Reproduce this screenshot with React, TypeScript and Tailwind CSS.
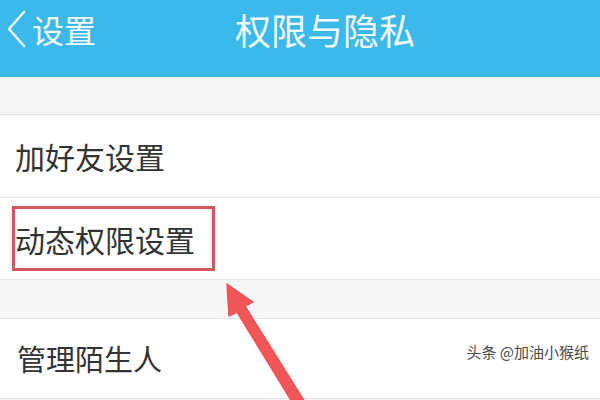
import React from "react";

const CJK = "font-['Noto_Sans_CJK_SC','Noto_Sans',sans-serif]";

function Row({ children, border = true }: { children: React.ReactNode; border?: boolean }) {
  return (
    <div className={`bg-white flex items-center ${border ? "border-t border-[#e4e5e7]" : ""}`}>
      {children}
    </div>
  );
}

export default function App() {
  return (
    <div className={`relative w-[600px] h-[400px] overflow-hidden bg-[#f5f6f8] ${CJK}`}>
      {/* top bar */}
      <div className="h-[77px] bg-[#3bb9ea] text-[#f4fbff]">
        <div className="h-[58px] flex items-center">
          <svg width="24" height="40" viewBox="0 0 24 40" className="ml-[4px]">
            <path d="M20 3 L5 20 L20 37" fill="none" stroke="#f4fbff" strokeWidth="2.4" strokeLinecap="round" strokeLinejoin="round" />
          </svg>
          <span className="ml-[4px] text-[32px] leading-none">设置</span>
          <span className="ml-[139px] text-[36px] leading-none">权限与隐私</span>
        </div>
      </div>

      <div className="h-[37px]" />

      <Row>
        <div className="h-[82px] flex items-center pl-[15px] text-[30px] text-[#333] leading-none">加好友设置</div>
      </Row>
      <Row>
        <div className="h-[81px] flex items-center pl-[12px]">
          <div className="w-[203px] h-[65px] border-[3px] border-[#d3585b] flex items-center text-[30px] text-[#333] leading-none">
            动态权限设置
          </div>
        </div>
      </Row>

      <div className="h-[39px] border-t border-[#e4e5e7]" />

      <div className="bg-white border-t border-b border-[#e4e5e7]">
        <div className="h-[79px] flex items-center pl-[17px] text-[29px] text-[#333] leading-none">管理陌生人</div>
      </div>

      {/* annotation arrow */}
      <svg className="absolute left-0 top-0 pointer-events-none" width="600" height="400" viewBox="0 0 600 400">
        <polygon
          points="227,284 253,302 245,306 310,410 300,415 237,312 229,316"
          fill="#f05558"
          stroke="#f05558"
          strokeWidth="1.5"
          strokeLinejoin="round"
        />
      </svg>

      {/* watermark */}
      <div className="absolute right-[11px] top-[344px] text-[15px] leading-none text-[#4a4a4a] [text-shadow:0_0_2px_#fff,0_0_2px_#fff]">
        头条 @加油小猴纸
      </div>
    </div>
  );
}
